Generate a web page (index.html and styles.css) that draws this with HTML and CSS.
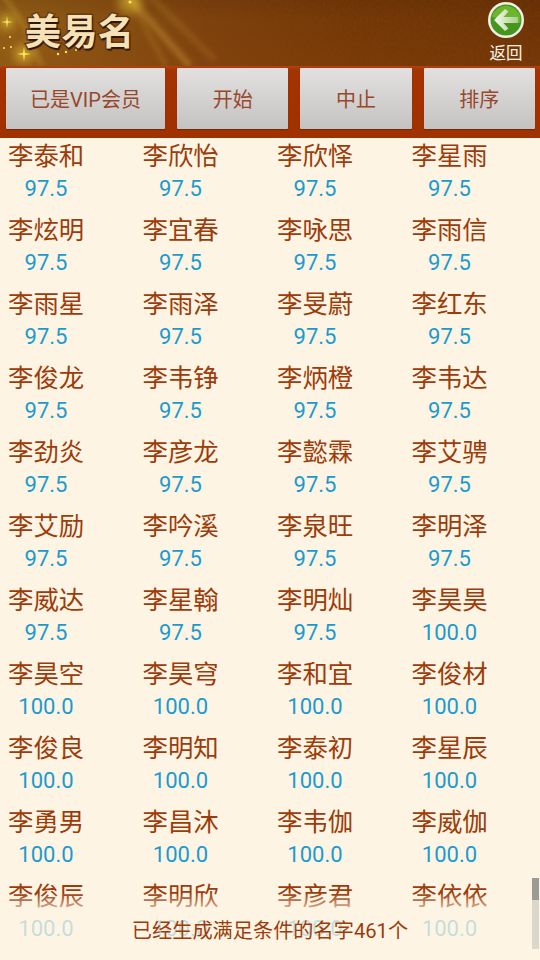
FILE: index.html
```html
<html>
    <head>
        <meta charset="utf-8">
        <link rel="stylesheet" href="styles.css">
    </head>
    <body>
        <div class="app">
            <div class="header">
                <svg class="texture" width="540" height="66" viewBox="0 0 540 66">
                    <defs>
                        <filter id="grain">
                            <feTurbulence type="fractalNoise" baseFrequency="0.35" numOctaves="3" seed="4"/>
                            <feColorMatrix values="0 0 0 0 0.2  0 0 0 0 0.08  0 0 0 0 0  0.9 0 0 0 -0.25"/>
                        </filter>
                        <filter id="soft">
                            <feGaussianBlur stdDeviation="2.500"/>
                        </filter>
                        <filter id="glow">
                            <feGaussianBlur stdDeviation="5"/>
                        </filter>
                    </defs>
                    <rect width="540" height="66" filter="url(#grain)" opacity="0.55"/>
                    <g filter="url(#soft)" fill="none" stroke="#e2b547">
                        <path d="M128 -4 L190 66" stroke-opacity="0.3" stroke-width="7"/>
                        <path d="M150 -4 L215 60" stroke-opacity="0.14" stroke-width="6"/>
                        <path d="M128 -4 L166 66" stroke-opacity="0.16" stroke-width="5"/>
                        <path d="M4 -4 L22 22 L42 66" stroke-opacity="0.3" stroke-width="4"/>
                    </g>
                    <g filter="url(#glow)" fill="#f2d23a">
                        <circle cx="7" cy="22" r="8" fill-opacity="0.5"/>
                        <circle cx="24" cy="54" r="10" fill-opacity="0.5"/>
                        <circle cx="130" cy="2" r="12" fill-opacity="0.45"/>
                    </g>
                    <g fill="#ffe85a">
                        <path d="M7 16 L7.800 21.200 L13 22 L7.800 22.800 L7 28 L6.200 22.800 L1 22 L6.200 21.200 Z"/>
                        <path d="M24 47 L25 53 L31 54 L25 55 L24 61 L23 55 L17 54 L23 53 Z"/>
                        <circle cx="10" cy="37" r="1"/>
                        <circle cx="4" cy="48" r="1"/>
                        <circle cx="11" cy="47" r="1"/>
                        <circle cx="58" cy="54" r="1.200"/>
                        <circle cx="66" cy="52" r="1.200"/>
                        <circle cx="76" cy="50" r="1"/>
                        <circle cx="130" cy="2" r="1.500"/>
                    </g>
                </svg>
                <div class="logo">美易名</div>
                <div class="back">
                    <svg width="38" height="38" viewBox="0 0 38 38">
                        <defs>
                            <linearGradient id="tail" x1="0" x2="1" y1="0" y2="0">
                                <stop offset="0" stop-color="#f6f9f0"/>
                                <stop offset="1" stop-color="#a9d083"/>
                            </linearGradient>
                        </defs>
                        <circle cx="19" cy="19" r="18" fill="#eef1e6"/>
                        <circle cx="19" cy="19" r="15.500" fill="#45951f"/>
                        <path d="M4.500 16 A15 15 0 0 1 33.500 16 L33.500 22 L4.500 16 Z" fill="#6db42f"/>
                        <path d="M7 19 L18 8 L21.500 10.500 L16.500 16 L31 16 L31 22 L16.500 22 L21.500 27.500 L18 30 Z" fill="url(#tail)"/>
                    </svg>
                    <span>返回</span>
                </div>
            </div>
            <div class="toolbar">
                <button class="wide">已是VIP会员</button>
                <button>开始</button>
                <button>中止</button>
                <button>排序</button>
            </div>
            <div class="list">
                <div class="item"><div class="name">李泰和</div><div class="score">97.5</div></div>
                <div class="item"><div class="name">李欣怡</div><div class="score">97.5</div></div>
                <div class="item"><div class="name">李欣怿</div><div class="score">97.5</div></div>
                <div class="item"><div class="name">李星雨</div><div class="score">97.5</div></div>
                <div class="item"><div class="name">李炫明</div><div class="score">97.5</div></div>
                <div class="item"><div class="name">李宜春</div><div class="score">97.5</div></div>
                <div class="item"><div class="name">李咏思</div><div class="score">97.5</div></div>
                <div class="item"><div class="name">李雨信</div><div class="score">97.5</div></div>
                <div class="item"><div class="name">李雨星</div><div class="score">97.5</div></div>
                <div class="item"><div class="name">李雨泽</div><div class="score">97.5</div></div>
                <div class="item"><div class="name">李旻蔚</div><div class="score">97.5</div></div>
                <div class="item"><div class="name">李红东</div><div class="score">97.5</div></div>
                <div class="item"><div class="name">李俊龙</div><div class="score">97.5</div></div>
                <div class="item"><div class="name">李韦铮</div><div class="score">97.5</div></div>
                <div class="item"><div class="name">李炳橙</div><div class="score">97.5</div></div>
                <div class="item"><div class="name">李韦达</div><div class="score">97.5</div></div>
                <div class="item"><div class="name">李劲炎</div><div class="score">97.5</div></div>
                <div class="item"><div class="name">李彦龙</div><div class="score">97.5</div></div>
                <div class="item"><div class="name">李懿霖</div><div class="score">97.5</div></div>
                <div class="item"><div class="name">李艾骋</div><div class="score">97.5</div></div>
                <div class="item"><div class="name">李艾励</div><div class="score">97.5</div></div>
                <div class="item"><div class="name">李吟溪</div><div class="score">97.5</div></div>
                <div class="item"><div class="name">李泉旺</div><div class="score">97.5</div></div>
                <div class="item"><div class="name">李明泽</div><div class="score">97.5</div></div>
                <div class="item"><div class="name">李威达</div><div class="score">97.5</div></div>
                <div class="item"><div class="name">李星翰</div><div class="score">97.5</div></div>
                <div class="item"><div class="name">李明灿</div><div class="score">97.5</div></div>
                <div class="item"><div class="name">李昊昊</div><div class="score">100.0</div></div>
                <div class="item"><div class="name">李昊空</div><div class="score">100.0</div></div>
                <div class="item"><div class="name">李昊穹</div><div class="score">100.0</div></div>
                <div class="item"><div class="name">李和宜</div><div class="score">100.0</div></div>
                <div class="item"><div class="name">李俊材</div><div class="score">100.0</div></div>
                <div class="item"><div class="name">李俊良</div><div class="score">100.0</div></div>
                <div class="item"><div class="name">李明知</div><div class="score">100.0</div></div>
                <div class="item"><div class="name">李泰初</div><div class="score">100.0</div></div>
                <div class="item"><div class="name">李星辰</div><div class="score">100.0</div></div>
                <div class="item"><div class="name">李勇男</div><div class="score">100.0</div></div>
                <div class="item"><div class="name">李昌沐</div><div class="score">100.0</div></div>
                <div class="item"><div class="name">李韦伽</div><div class="score">100.0</div></div>
                <div class="item"><div class="name">李威伽</div><div class="score">100.0</div></div>
                <div class="item"><div class="name">李俊辰</div><div class="score">100.0</div></div>
                <div class="item"><div class="name">李明欣</div><div class="score">100.0</div></div>
                <div class="item"><div class="name">李彦君</div><div class="score">100.0</div></div>
                <div class="item"><div class="name">李依依</div><div class="score">100.0</div></div>
            </div>
            <div class="fade"></div>
            <div class="status">已经生成满足条件的名字461个</div>
            <div class="scrollbar"></div>
        </div>
    </body>
</html>
```

FILE: styles.css
```css
body {
    margin: 0;
    background: #fef4e4;
    font-family: "Roboto", "Noto Sans CJK SC", sans-serif;
}
.app {
    position: relative;
    width: 540px;
    height: 960px;
    overflow: hidden;
    display: flex;
    flex-direction: column;
}
.header {
    position: relative;
    height: 66px;
    flex: none;
    display: flex;
    justify-content: space-between;
    background:
        linear-gradient(180deg, rgba(60, 20, 0, 0.15), rgba(0, 0, 0, 0) 30%, rgba(150, 70, 15, 0.2)),
        linear-gradient(90deg, #93601a 0, #8a5215 18%, #7e4010 38%, #743608 65%, #6d3107 100%);
}
.texture {
    position: absolute;
    top: 0;
    left: 0;
}
.logo {
    position: relative;
    margin: 6px 0 0 25px;
    font-family: "Noto Sans CJK SC", sans-serif;
    font-size: 36px;
    font-weight: 700;
    line-height: 46px;
    letter-spacing: 0.500px;
    color: #f6e2b8;
    -webkit-text-stroke: 3px #6a3a12;
    paint-order: stroke fill;
    text-shadow: 1px 2px 1px #2e1603;
}
.back {
    position: relative;
    width: 38px;
    margin: 0 15px 0 0;
    padding-top: 1px;
    display: flex;
    flex-direction: column;
    align-items: center;
    color: #fdf6ea;
    font-size: 16.500px;
    line-height: 17px;
}
.back svg {
    flex: none;
}
.back span {
    margin-top: 6px;
    white-space: nowrap;
}
.toolbar {
    height: 72px;
    flex: none;
    box-sizing: border-box;
    padding: 2px 5px 0 6px;
    display: flex;
    gap: 12px;
    background: linear-gradient(180deg, #b24312 0, #a33300 6%, #a03200 100%);
}
.toolbar button {
    flex: 1;
    height: 61px;
    padding: 0;
    border: 0;
    border-radius: 1px;
    background: linear-gradient(180deg, #e2e1e0, #c4c3c2);
    box-shadow: 0 1px 1px #6f2a08;
    color: #98472b;
    font-family: "Roboto", "Noto Sans CJK SC", sans-serif;
    font-size: 20px;
}
.toolbar .wide {
    flex: none;
    width: 159px;
}
.list {
    flex: 1;
    display: grid;
    grid-template-columns: 134.500px 134.500px 134.500px 128px;
    grid-auto-rows: 74px;
    padding: 1px 0 0 8px;
    align-content: start;
}
.item {
    display: flex;
    flex-direction: column;
    width: 76px;
}
.name {
    height: 36px;
    line-height: 34px;
    font-size: 25.400px;
    white-space: nowrap;
    color: #9c3c0a;
}
.score {
    height: 32px;
    line-height: 28px;
    font-size: 22px;
    text-align: center;
    color: #1a9bd0;
}
.fade {
    position: absolute;
    left: 0;
    right: 0;
    bottom: 0;
    height: 67px;
    background: linear-gradient(180deg, rgba(254, 244, 228, 0) 0, rgba(254, 244, 228, 0.74) 28%, rgba(254, 244, 228, 0.74) 100%);
}
.status {
    position: absolute;
    left: 0;
    right: 0;
    bottom: 16px;
    text-align: center;
    font-size: 20.200px;
    line-height: 26px;
    color: #9c3c0a;
}
.scrollbar {
    position: absolute;
    right: 1px;
    bottom: 11px;
    width: 7px;
    height: 71px;
    background: linear-gradient(180deg, #9b9b95 0, #9b9b95 22px, #dcd7cb 22px, #dcd7cb 100%);
}
```
